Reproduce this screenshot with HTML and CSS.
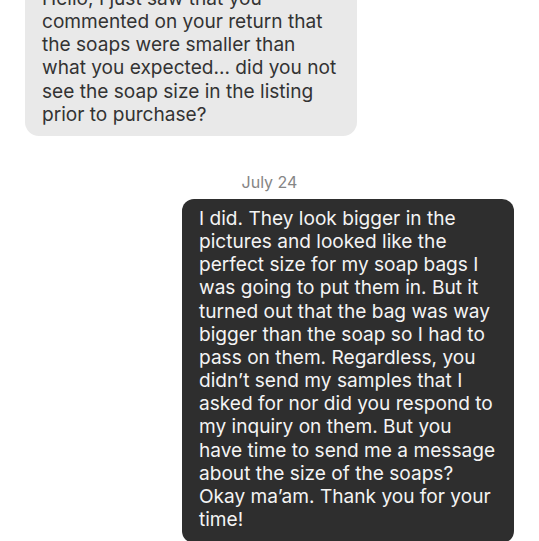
FILE: index.html
```html
<!DOCTYPE html>
<html>
<head>
<meta charset="utf-8">
<link rel="stylesheet" href="styles.css">
</head>
<body>
<div class="thread">
  <div class="bubble bubble-in">Hello, I just saw that you commented on your return that the soaps were smaller than what you expected... did you not see the soap size in the listing prior to purchase?</div>
  <div class="date">July 24</div>
  <div class="bubble bubble-out">I did. They look bigger in the pictures and looked like the perfect size for my soap bags I was going to put them in. But it turned out that the bag was way bigger than the soap so I had to pass on them. Regardless, you didn’t send my samples that I asked for nor did you respond to my inquiry on them. But you have time to send me a message about the size of the soaps? Okay ma’am. Thank you for your time!</div>
</div>
</body>
</html>
```
FILE: styles.css
```css
html, body {
  margin: 0;
  padding: 0;
  background: #ffffff;
  overflow: hidden;
}
.thread {
  display: flex;
  flex-direction: column;
  padding: 0 25px;
  margin-top: -23px;
  font-family: Inter, "Noto Sans", sans-serif;
}
.bubble {
  width: 332px;
  box-sizing: border-box;
  border-radius: 14px;
  padding: 10px 16px 10px 17px;
  font-size: 19.1px;
  line-height: 23.15px;
}
.bubble-in {
  align-self: flex-start;
  background: #e9e9e9;
  color: #333333;
}
.bubble-out {
  align-self: flex-end;
  background: #2e2e2e;
  color: #f4f4f4;
  border-radius: 12px;
  padding: 8px 18px 12px 17px;
}
.date {
  align-self: center;
  margin: 36px 0 7px;
  font-size: 16px;
  line-height: 20px;
  color: #858585;
}
```
